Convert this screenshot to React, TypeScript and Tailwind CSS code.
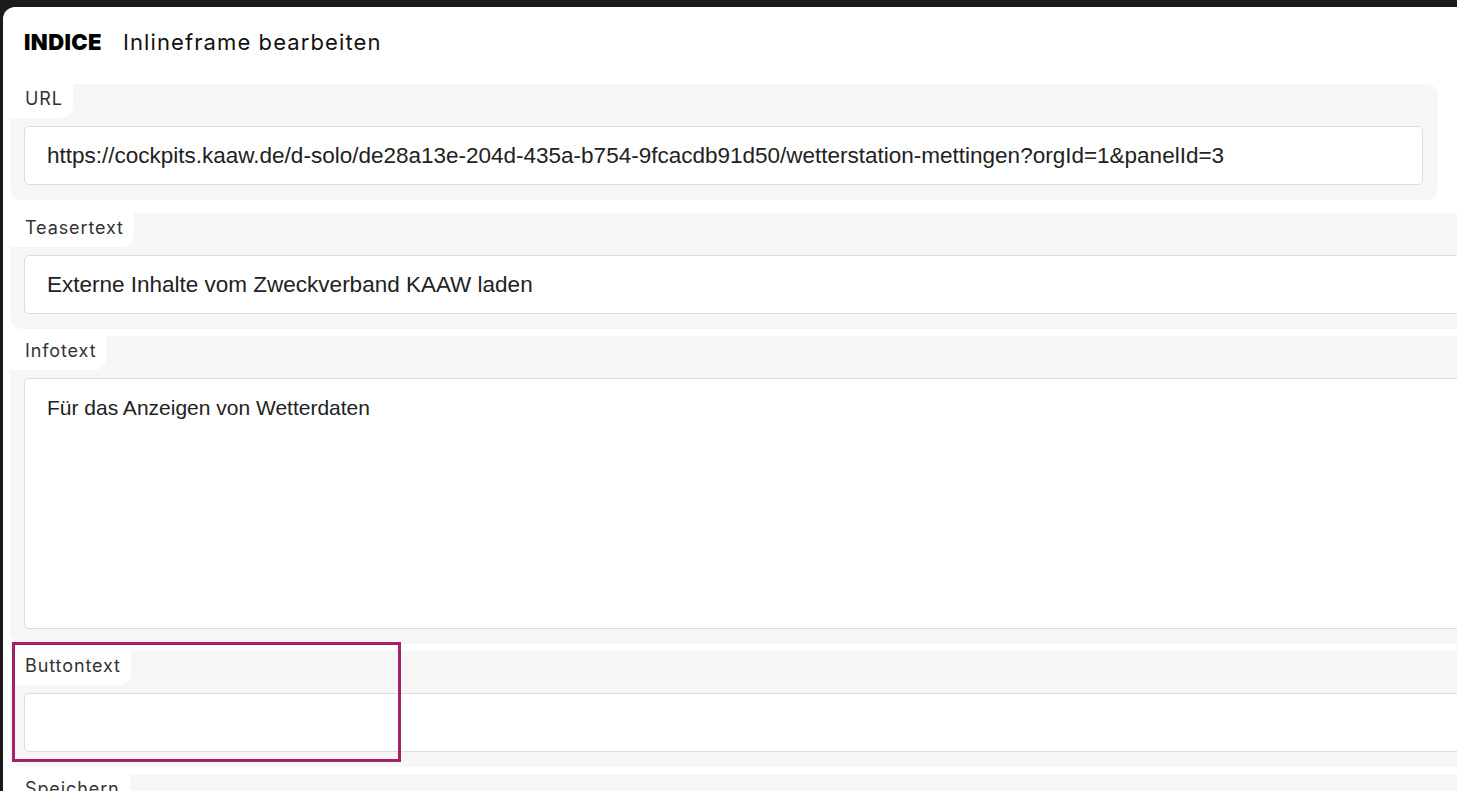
const labelFont = { fontFamily: "Inter, 'Noto Sans', sans-serif" };
const inputFont = { fontFamily: "'Liberation Sans', Arial, sans-serif" };

const Field = ({
  label,
  children,
  className,
}: {
  label: string;
  children: React.ReactNode;
  className?: string;
}) => (
  <section className={"bg-[#f6f6f6] rounded-[12px] " + (className ?? "")}>
    <div
      className="w-fit h-[34px] bg-white rounded-br-[12px] pl-[15px] pr-[10px] pb-[5px] flex items-center text-[18px] tracking-[0.9px] text-[#333]"
      style={labelFont}
    >
      {label}
    </div>
    <div className="pt-[8px] pl-[14px] pr-[15px] pb-[15px]">{children}</div>
  </section>
);

const TextInput = ({ value }: { value: string }) => (
  <div
    className="h-[59px] bg-white border border-[#dcdcdc] rounded-[5px] pl-[22px] flex items-center text-[22.5px] text-[#222] whitespace-nowrap overflow-hidden"
    style={inputFont}
  >
    {value}
  </div>
);

export default function App() {
  return (
    <div className="relative w-[1457px] h-[791px] overflow-hidden bg-[#1b1b1b] pt-[7px] pl-[3px]">
      <div className="h-full bg-white rounded-tl-[12px] pl-[7px] overflow-hidden">
        <header className="h-[77px] flex items-center gap-[21px] pl-[14px] pb-[7px]" style={labelFont}>
          <span className="text-[22px] font-black tracking-[0.4px] text-black">INDICE</span>
          <span className="text-[22px] tracking-[1.1px] text-[#111]">Inlineframe bearbeiten</span>
        </header>

        <Field label="URL" className="w-[1428px] mb-[13px]">
          <TextInput value="https://cockpits.kaaw.de/d-solo/de28a13e-204d-435a-b754-9fcacdb91d50/wetterstation-mettingen?orgId=1&panelId=3" />
        </Field>

        <div className="w-[1500px] flex flex-col gap-[7px]">
          <Field label="Teasertext">
            <TextInput value="Externe Inhalte vom Zweckverband KAAW laden" />
          </Field>

          <Field label="Infotext">
            <div
              className="h-[251px] bg-white border border-[#dcdcdc] rounded-[5px] pl-[22px] pt-[17px] text-[21px] leading-[24px] text-[#222]"
              style={inputFont}
            >
              Für das Anzeigen von Wetterdaten
            </div>
          </Field>

          <Field label="Buttontext">
            <TextInput value="" />
          </Field>

          <Field label="Speichern">
            <div className="h-[59px]" />
          </Field>
        </div>
      </div>

      {/* highlight */}
      <div className="absolute left-[12px] top-[642px] w-[389px] h-[120px] border-[3px] border-[#a3206a]" />
    </div>
  );
}
